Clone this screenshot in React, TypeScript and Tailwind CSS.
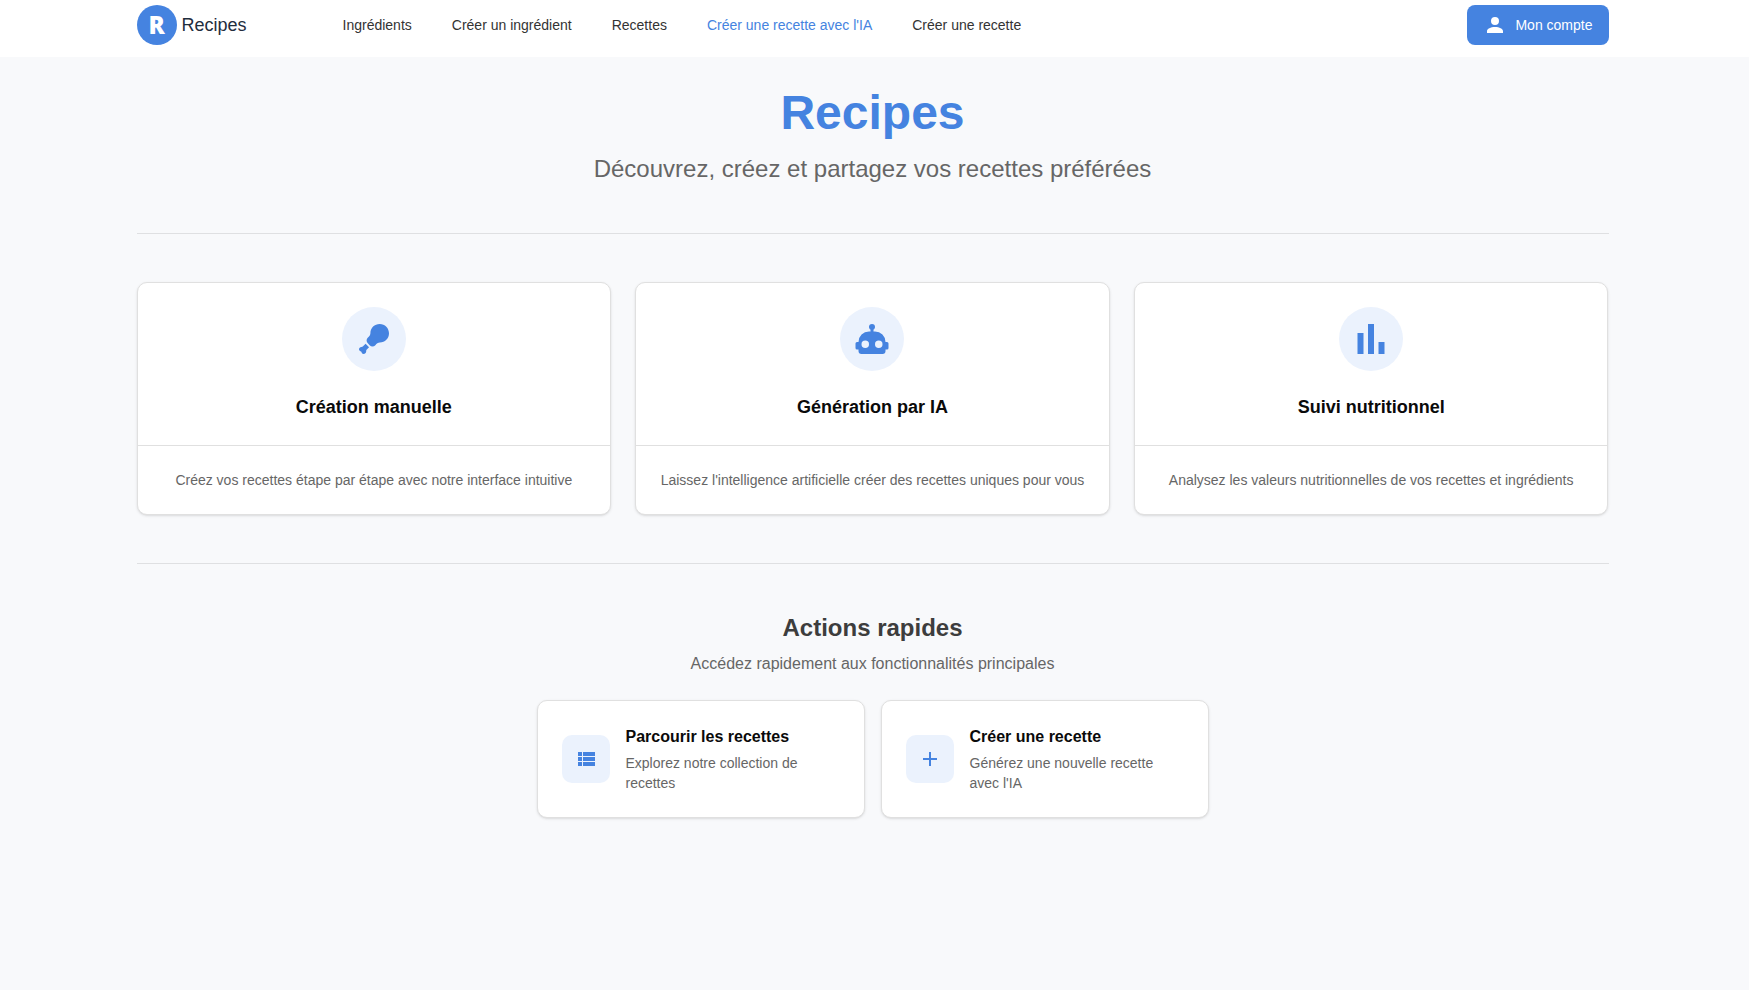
import React from "react";

const icons = {
  account:
    "M12,4A4,4 0 0,1 16,8A4,4 0 0,1 12,12A4,4 0 0,1 8,8A4,4 0 0,1 12,4M12,14C16.42,14 20,15.79 20,18V20H4V18C4,15.79 7.58,14 12,14Z",
  drumstick:
    "M15.8,2C19.3,2 22,4.8 22,8.2C22,11.7 19.3,14.4 15.9,14.4C14.6,14.5 13.8,15.2 12.9,16.1C11.8,17.2 10.2,17.2 9.1,16.1L7.9,14.9C6.8,13.8 6.8,12.3 7.8,11.2C8.8,10.2 9.6,9.4 9.6,8.1C9.6,4.6 12.4,2 15.8,2M6.4,15.2L8.7,17.5L6.9,19.3C6.8,19.6 6.8,19.9 6.8,20.3C6.7,21.3 6,22 5.1,22C4.3,22 3.8,21.4 3.6,20.5C2.7,20.3 2,19.7 2,18.9C2,18 2.7,17.3 3.6,17.3C4.1,17.3 4.4,17.2 4.7,16.9L6.4,15.2Z",
  robot:
    "M12,2A2,2 0 0,1 14,4C14,4.74 13.6,5.39 13,5.73V7H14A7,7 0 0,1 21,14H22A1,1 0 0,1 23,15V18A1,1 0 0,1 22,19H21V20A2,2 0 0,1 19,22H5A2,2 0 0,1 3,20V19H2A1,1 0 0,1 1,18V15A1,1 0 0,1 2,14H3A7,7 0 0,1 10,7H11V5.73C10.4,5.39 10,4.74 10,4A2,2 0 0,1 12,2M7.5,13A2.5,2.5 0 0,0 5,15.5A2.5,2.5 0 0,0 7.5,18A2.5,2.5 0 0,0 10,15.5A2.5,2.5 0 0,0 7.5,13M16.5,13A2.5,2.5 0 0,0 14,15.5A2.5,2.5 0 0,0 16.5,18A2.5,2.5 0 0,0 19,15.5A2.5,2.5 0 0,0 16.5,13Z",
  poll: "M3,22V8H7V22H3M10,22V2H14V22H10M17,22V14H21V22H17Z",
  list: "M9,5V9H21V5M9,19H21V15H9M9,14H21V10H9M4,9H8V5H4M4,19H8V15H4M4,14H8V10H4V14Z",
  plus: "M19,13H13V19H11V13H5V11H11V5H13V11H19V13Z",
};

function Icon({ name, className }: { name: keyof typeof icons; className: string }) {
  return (
    <svg viewBox="0 0 24 24" fill="currentColor" aria-hidden="true" className={className}>
      <path d={icons[name]} />
    </svg>
  );
}

const links = [
  { label: "Ingrédients", active: false },
  { label: "Créer un ingrédient", active: false },
  { label: "Recettes", active: false },
  { label: "Créer une recette avec l'IA", active: true },
  { label: "Créer une recette", active: false },
];

const features = [
  {
    icon: "drumstick",
    title: "Création manuelle",
    text: "Créez vos recettes étape par étape avec notre interface intuitive",
  },
  {
    icon: "robot",
    title: "Génération par IA",
    text: "Laissez l'intelligence artificielle créer des recettes uniques pour vous",
  },
  {
    icon: "poll",
    title: "Suivi nutritionnel",
    text: "Analysez les valeurs nutritionnelles de vos recettes et ingrédients",
  },
] as const;

const actions = [
  { icon: "list", title: "Parcourir les recettes", text: "Explorez notre collection de recettes" },
  { icon: "plus", title: "Créer une recette", text: "Générez une nouvelle recette avec l'IA" },
] as const;

export default function App() {
  return (
    <div className="min-h-screen bg-[#f8f9fb] font-['Liberation_Sans',Arial,sans-serif] text-[#0a0a0a]">
      <header className="bg-white pr-1">
        <div className="mx-auto flex max-w-[1536px] items-center px-8 pt-[5px] pb-3">
          <a href="#" className="flex items-center gap-[5px] text-lg leading-6 text-[#1f2d3d]">
            <span className="flex size-10 items-center justify-center rounded-full bg-[#4583e0] font-['Open_Sans',sans-serif] text-2xl font-extrabold text-white">
              R
            </span>
            Recipes
          </a>
          <nav className="ml-24 flex flex-1 flex-wrap gap-x-10 text-sm text-[#333333]">
            {links.map((link) => (
              <a key={link.label} href="#" className={link.active ? "text-[#4583e0]" : ""}>
                {link.label}
              </a>
            ))}
          </nav>
          <button
            type="button"
            className="flex h-10 items-center gap-2 rounded-lg bg-[#4583e0] px-4 text-sm text-white"
          >
            <Icon name="account" className="size-6" />
            Mon compte
          </button>
        </div>
      </header>

      <main className="pr-1">
        <div className="mx-auto max-w-[1536px] px-8 pt-8">
          <section className="pb-12 text-center">
            <h1 className="text-5xl font-bold text-[#4583e0]">Recipes</h1>
            <p className="mt-4 text-2xl text-[#666666]">
              Découvrez, créez et partagez vos recettes préférées
            </p>
          </section>

          <section className="grid gap-6 border-y border-[#dfe0e2] py-12 lg:grid-cols-3">
            {features.map((feature) => (
              <article
                key={feature.title}
                className="rounded-[10px] border border-[#e0e0e0] bg-white text-center shadow-sm"
              >
                <div className="flex flex-col items-center gap-[22px] border-b border-[#e0e0e0] p-6">
                  <span className="flex size-16 items-center justify-center rounded-full bg-[#ebf2fd] text-[#4583e0]">
                    <Icon name={feature.icon} className="size-9" />
                  </span>
                  <h2 className="text-lg font-bold">{feature.title}</h2>
                </div>
                <p className="p-6 text-sm text-[#666666]">{feature.text}</p>
              </article>
            ))}
          </section>

          <section className="pt-12 pb-12 text-center">
            <h2 className="text-2xl font-bold text-[#3d3d3d]">Actions rapides</h2>
            <p className="mt-2 text-base text-[#666666]">
              Accédez rapidement aux fonctionnalités principales
            </p>
            <div className="mx-auto mt-6 grid max-w-[672px] gap-4 text-left sm:grid-cols-2">
              {actions.map((action) => (
                <a
                  key={action.title}
                  href="#"
                  className="flex items-center gap-4 rounded-[10px] border border-[#e0e0e0] bg-white p-6 shadow-sm"
                >
                  <span className="flex size-12 shrink-0 items-center justify-center rounded-[10px] bg-[#ebf2fd] text-[#4583e0]">
                    <Icon name={action.icon} className="size-6" />
                  </span>
                  <span>
                    <strong className="block text-base font-bold">{action.title}</strong>
                    <span className="mt-1 block text-sm text-[#666666]">{action.text}</span>
                  </span>
                </a>
              ))}
            </div>
          </section>
        </div>
      </main>
    </div>
  );
}
